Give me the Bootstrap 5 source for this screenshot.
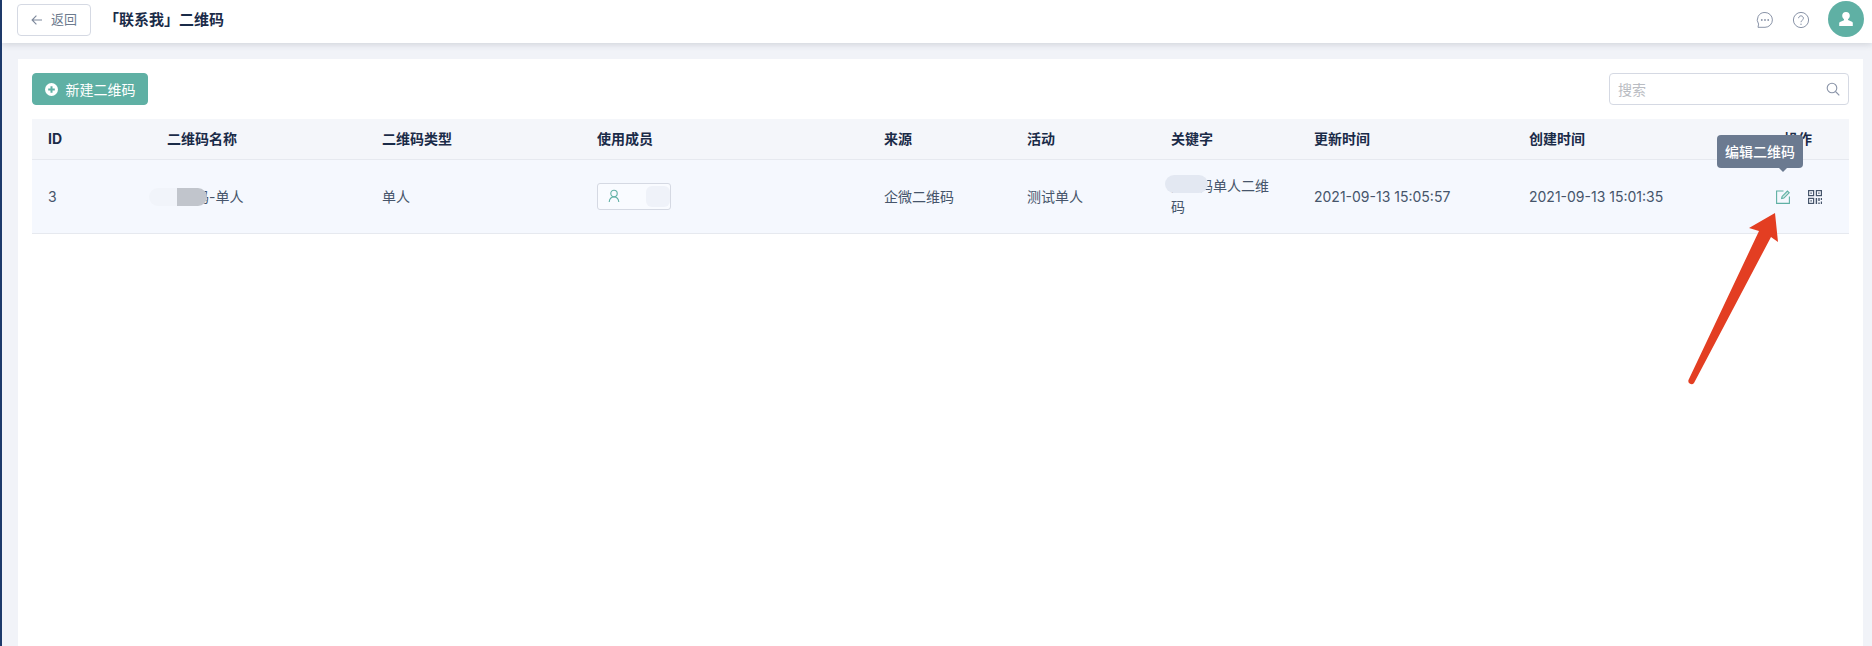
<!DOCTYPE html>
<html lang="zh">
<head>
<meta charset="utf-8">
<title>「联系我」二维码</title>
<link href="https://cdn.jsdelivr.net/npm/bootstrap@5.3.0/dist/css/bootstrap.min.css" rel="stylesheet">
<style>
html,body{height:100%;margin:0;}
body{font-family:Inter,"Noto Sans CJK SC",sans-serif;font-size:14px;color:#46556b;background:#f1f3f8;overflow:hidden;}
.shell{height:646px;border-left:2px solid #1d3a6b;position:relative;display:flex;flex-direction:column;}
.topbar{height:43px;flex:none;background:#fff;box-shadow:0 2px 6px rgba(60,70,90,.16);padding:0 8px 0 15px;position:relative;z-index:2;}
.back-btn{width:74px;height:32px;padding:0;font-size:13px;color:#6c7a8e;border:1px solid #d5d9e3;border-radius:4px;background:#fff;margin-bottom:3px;}
.page-title{font-size:15px;font-weight:700;color:#1a2b48;margin:0 0 3px 13px;}
.top-icon{width:18px;height:18px;display:block;}
.avatar{width:36px;height:36px;border-radius:50%;background:#5fb0a4;margin-bottom:5px;}
.sheet{flex:1;background:#fff;margin:16px 9px 0 16px;padding:14px;}
.new-btn{height:32px;width:116px;padding:0;font-size:14px;background:#5fb0a4;border-color:#5fb0a4;color:#fff;border-radius:4px;}
.search-box{width:240px;height:32px;border:1px solid #d5d9e3;border-radius:4px;padding:0 8px;}
.search-box input{border:0;outline:0;background:transparent;font-size:14px;padding:0;width:100%;}
.search-box input::placeholder{color:#b9bcc2;}
.qr-table{table-layout:fixed;width:1817px;margin:14px 0 0;border-collapse:collapse;font-size:14px;}
.qr-table th{background:#f4f6fa;color:#1a2b48;font-weight:700;height:40px;padding:0 16px;border-bottom:1px solid #e6e9ef;box-shadow:none;vertical-align:middle;}
.qr-table td{background:#f5f8fe;color:#46556b;height:74px;padding:0 16px;border-bottom:1px solid #e6e9ef;box-shadow:none;vertical-align:middle;line-height:21px;}
.w-120{width:119px}.w-143{width:143px}.w-144{width:144px}.w-215{width:215px}.w-287{width:287px}
.qr-table .ops-head{text-align:right;padding-right:37px;}
.qr-table .ops-cell{padding-right:27px;}
.ops-row{gap:18px;padding-top:2px;}
.patch-wrap{position:relative;display:inline-block;}
.patch{position:absolute;display:block;}
.patch-a{left:-18px;top:2px;width:28px;height:18px;background:#f1f4fa;border-radius:9px 0 0 9px;}
.patch-b{left:10px;top:2px;width:30px;height:18px;background:#c1c5cc;border-radius:0 9px 9px 0;}
.patch-c{left:-6px;top:0;width:43px;height:18px;background:#e3e8f2;border-radius:9px;}
.member{width:74px;height:27px;border:1px solid #d5d9e3;border-radius:3px;position:relative;padding-left:9px;background:#f9fbff;}
.member .patch{right:0;top:2px;width:24px;height:21px;background:#eff2f9;border-radius:6px;}
.op-icon{width:14px;height:14px;display:block;}
.op-anchor{position:relative;display:block;}
.tip{position:absolute;right:-13px;bottom:36px;width:86px;height:33px;background:#6b7a90;color:#fff;border-radius:4px;font-size:14px;font-weight:500;display:flex;align-items:center;justify-content:center;white-space:nowrap;}
.tip::after{content:"";position:absolute;right:16px;top:100%;border:4px solid transparent;border-bottom:0;border-top-color:#6b7a90;}
.red-arrow{position:absolute;left:1684px;top:210px;width:96px;height:178px;z-index:5;}
</style>
</head>
<body>
<div class="shell">
  <header class="topbar d-flex align-items-center">
    <button type="button" class="btn back-btn d-flex align-items-center justify-content-center gap-2">
      <svg width="12" height="12" viewBox="0 0 12 12" fill="none" stroke="#7d889b" stroke-width="1.1"><path d="M11 6H1.2M5.4 1.6 1.1 6l4.3 4.4"/></svg>
      <span>返回</span>
    </button>
    <h1 class="page-title">「联系我」二维码</h1>
    <div class="ms-auto d-flex align-items-center">
      <svg class="top-icon mb-1" viewBox="0 0 18 18" fill="none" stroke="#8a94a8" stroke-width="1"><path d="M9 1.500a7.400 7.400 0 0 1 0 14.800H2l.6-3.200A7.400 7.400 0 0 1 9 1.500z"/><circle cx="5.800" cy="9" r=".9" fill="#8a94a8" stroke="none"/><circle cx="9" cy="9" r=".9" fill="#8a94a8" stroke="none"/><circle cx="12.200" cy="9" r=".9" fill="#8a94a8" stroke="none"/></svg>
      <svg class="top-icon mb-1" style="margin-left:18px" viewBox="0 0 18 18" fill="none" stroke="#8a94a8" stroke-width="1"><circle cx="9" cy="9" r="7.600"/><path d="M6.600 7.200a2.400 2.400 0 1 1 3.600 2.100c-.8.500-1.200 1-1.200 1.900"/><circle cx="9" cy="13.200" r=".7" fill="#8a94a8" stroke="none"/></svg>
      <div class="avatar d-flex align-items-center justify-content-center" style="margin-left:18px">
        <svg width="16" height="16" viewBox="0 0 16 16" fill="#fff"><path d="M8 1a3.800 3.800 0 0 1 3.800 3.800c0 1.500-.8 2.700-1.800 3.400v.9l4 1.700c.5.200.8.700.8 1.200V15H1.200v-2.900c0-.5.300-1 .8-1.200l4-1.700v-1C5 7.500 4.200 6.300 4.200 4.800A3.800 3.800 0 0 1 8 1z"/></svg>
      </div>
    </div>
  </header>

  <main class="sheet">
    <div class="d-flex justify-content-between">
      <button type="button" class="btn new-btn d-flex align-items-center justify-content-center gap-2">
        <svg width="13" height="13" viewBox="0 0 13 13"><circle cx="6.500" cy="6.500" r="6.500" fill="#fff"/><path d="M6.500 3.200v6.600M3.200 6.500h6.600" stroke="#5fb0a4" stroke-width="2"/></svg>
        <span>新建二维码</span>
      </button>
      <div class="search-box d-flex align-items-center">
        <input type="text" placeholder="搜索" aria-label="搜索">
        <svg class="flex-shrink-0" width="14" height="14" viewBox="0 0 14 14" fill="none" stroke="#8a94a8" stroke-width="1.100"><circle cx="6" cy="6" r="4.800"/><path d="m9.500 9.500 3.800 3.800"/></svg>
      </div>
    </div>

    <table class="table qr-table">
      <thead>
        <tr>
          <th class="w-120">ID</th>
          <th class="w-215">二维码名称</th>
          <th class="w-215">二维码类型</th>
          <th class="w-287">使用成员</th>
          <th class="w-143">来源</th>
          <th class="w-144">活动</th>
          <th class="w-143">关键字</th>
          <th class="w-215">更新时间</th>
          <th class="w-215">创建时间</th>
          <th class="ops-head">操作</th>
        </tr>
      </thead>
      <tbody>
        <tr>
          <td>3</td>
          <td><span class="patch-wrap">测试码-单人<span class="patch patch-a"></span><span class="patch patch-b"></span></span></td>
          <td>单人</td>
          <td>
            <div class="member d-flex align-items-center">
              <svg width="14" height="14" viewBox="0 0 14 14" fill="none" stroke="#5fb0a4" stroke-width="1.100"><circle cx="7" cy="4.500" r="3.200"/><path d="M2.200 13c.3-3 2-5 4.800-5s4.500 2 4.800 5"/></svg>
              <span class="patch"></span>
            </div>
          </td>
          <td>企微二维码</td>
          <td>测试单人</td>
          <td><span class="patch-wrap">测试码单人二维码<span class="patch patch-c"></span></span></td>
          <td>2021-09-13 15:05:57</td>
          <td>2021-09-13 15:01:35</td>
          <td class="ops-cell">
            <div class="d-flex justify-content-end ops-row">
              <span class="op-anchor">
                <svg class="op-icon" viewBox="0 0 14 14" fill="none" stroke="#5fb0a4" stroke-width="1.100"><path d="M7.500 1H.6v12.400H13.400V6.500"/><path d="m5.600 8.600.5-2.200L11.400 1l1.800 1.800-5.300 5.300z" fill="#cfe7e3"/></svg>
                <span class="tip">编辑二维码</span>
              </span>
              <svg class="op-icon" viewBox="0 0 14 14" fill="none" stroke="#46556b" stroke-width="1.200"><rect x=".6" y=".6" width="5" height="5"/><rect x="8.400" y=".6" width="5" height="5"/><rect x=".6" y="8.400" width="5" height="5"/><path d="M2.400 2.400h1.400v1.400H2.400zM10.200 2.400h1.400v1.400h-1.400zM2.400 10.200h1.400v1.400H2.400z" fill="#46556b" stroke="none"/><path d="M8.400 8v6M11 8v3M13.500 8v2M11 12.500V14M13.500 11.500V14" stroke-width="1.400"/></svg>
            </div>
          </td>
        </tr>
      </tbody>
    </table>
  </main>

  <svg class="red-arrow" viewBox="1686 210 96 178" aria-hidden="true">
    <path d="M1775 213 1778 242 1771 237 1694 383a3.200 3.200 0 0 1-5.500-3L1759 231 1749 228z" fill="#e33e22"/>
  </svg>
</div>
<script src="https://cdn.jsdelivr.net/npm/bootstrap@5.3.0/dist/js/bootstrap.bundle.min.js"></script>
</body>
</html>
